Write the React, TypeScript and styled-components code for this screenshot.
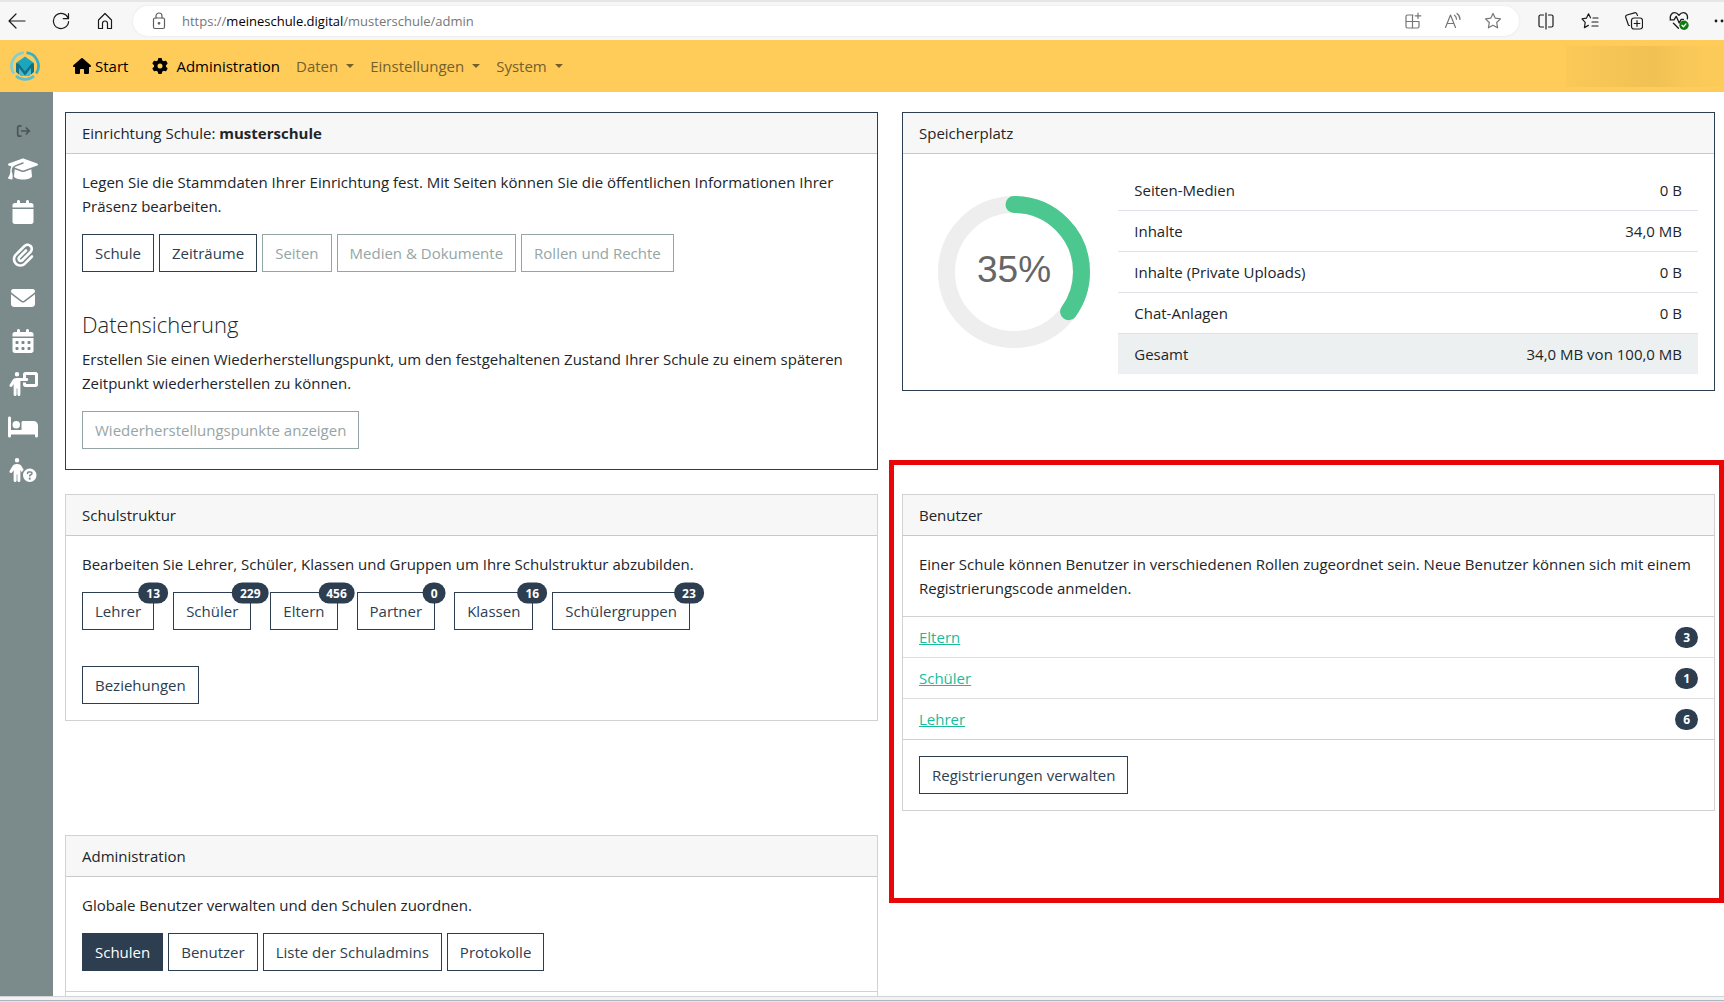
import React from "react";
import styled, { createGlobalStyle, css } from "styled-components";
import {
  FaBed,
  FaCalendar,
  FaCalendarDays,
  FaEnvelope,
  FaGear,
  FaGraduationCap,
  FaHouse,
  FaPaperclip,
  FaPersonChalkboard,
  FaPersonCircleQuestion,
} from "react-icons/fa6";

const color = {
  primary: "#2c3e50",
  muted: "#95a5a6",
  text: "#212529",
  link: "#18bc9c",
  nav: "#ffcc5a",
  side: "#7b8a8b",
  line: "#d2d2d2",
};

const GlobalStyle = createGlobalStyle`
  *, *::before, *::after { box-sizing: border-box; }
  body {
    margin: 0;
    background: #fff;
    color: ${color.text};
    font-family: "Open Sans", "Noto Sans", sans-serif;
    font-size: 15px;
    line-height: 24px;
  }
  button { font: inherit; color: inherit; cursor: pointer; }
  p { margin: 0; }
`;

const Page = styled.div`
  height: 100vh;
  display: flex;
  flex-direction: column;
  overflow: hidden;
`;

/* ---------- browser bar ---------- */

const BrowserBar = styled.header`
  flex: none;
  height: 40px;
  display: flex;
  align-items: center;
  border-top: 2px solid #e6e6e6;
  background: #f7f7f7;
  padding: 0 0 0 8px;
  overflow: hidden;
`;

const BarButton = styled.button<{ $tone?: string; $space?: number }>`
  flex: none;
  display: flex;
  padding: 0;
  border: 0;
  background: none;
  color: ${(p) => p.$tone ?? "#1b1b1b"};
  margin-right: ${(p) => p.$space ?? 0}px;
`;

const Address = styled.div`
  flex: 1;
  min-width: 0;
  height: 30px;
  display: flex;
  align-items: center;
  margin: 0 18px 0 19px;
  padding: 0 17px;
  border-radius: 15px;
  background: #fff;
  box-shadow: 0 0 3px rgba(0, 0, 0, 0.08);
`;

const Url = styled.span`
  flex: 1;
  margin-left: 14px;
  color: #767676;
  font-size: 13px;
  line-height: 20px;
  white-space: nowrap;

  b {
    font-weight: 400;
    color: #000;
  }
`;

const Glyph = ({ children, size = 18, w = 1.2 }: { children: React.ReactNode; size?: number; w?: number }) => (
  <svg width={size} height={size} viewBox="0 0 18 18" fill="none" stroke="currentColor" strokeWidth={w} strokeLinecap="round" strokeLinejoin="round" aria-hidden="true">
    {children}
  </svg>
);

const star = "M9 1.4l2.3 4.8 5.2.7-3.8 3.6.9 5.3L9 13.3l-4.6 2.5.9-5.3L1.500 6.900l5.200-.7z";

const Browser = () => (
  <BrowserBar>
    <BarButton aria-label="Zurück" $space={26}>
      <Glyph><path d="M17 9H1.200M8 2L1 9l7 7" /></Glyph>
    </BarButton>
    <BarButton aria-label="Neu laden" $space={26}>
      <Glyph><path d="M16.200 6.500A7.600 7.600 0 1 0 16.600 9.500M16.500 1.500v5.200h-5.200" /></Glyph>
    </BarButton>
    <BarButton aria-label="Startseite">
      <Glyph><path d="M2.500 8L9 1.500 15.500 8v8.500h-4v-5a2.500 2.500 0 0 0-5 0v5h-4z" /></Glyph>
    </BarButton>
    <Address>
      <BarButton aria-label="Websiteinformationen" $tone="#5f5f5f">
        <Glyph>
          <rect x="3.500" y="6" width="11" height="10.500" rx="1.500" />
          <path d="M6 6V4a3 3 0 0 1 6 0v2" />
          <circle cx="9" cy="11.300" r=".8" fill="currentColor" />
        </Glyph>
      </BarButton>
      <Url>https://<b>meineschule.digital</b>/musterschule/admin</Url>
      <BarButton aria-label="App installieren" $tone="#767676" $space={22}>
        <Glyph>
          <path d="M9 3H3.500A1.500 1.500 0 0 0 2 4.500v10A1.500 1.500 0 0 0 3.500 16h10a1.500 1.500 0 0 0 1.500-1.500V9.500M2 9.500h13M8.500 3v13M14 1v5.500M11.200 3.800h5.600" />
        </Glyph>
      </BarButton>
      <BarButton aria-label="Laut vorlesen" $tone="#767676" $space={22}>
        <Glyph><path d="M1.500 15.500L6.500 3l5 12.500M3.200 11.500h6.600M10.500 3.200a5 5 0 0 1 2 4M13 1.500a7.500 7.500 0 0 1 3 6" /></Glyph>
      </BarButton>
      <BarButton aria-label="Zu Favoriten hinzufügen" $tone="#767676">
        <Glyph><path d={star} /></Glyph>
      </BarButton>
    </Address>
    <BarButton aria-label="Geteilter Bildschirm" $space={26}>
      <Glyph><path d="M6.500 3H3.500A1.500 1.500 0 0 0 2 4.500v9A1.500 1.500 0 0 0 3.500 15h3M11.500 3h3A1.500 1.500 0 0 1 16 4.500v9a1.500 1.500 0 0 1-1.500 1.500h-3M9 1v16" /></Glyph>
    </BarButton>
    <BarButton aria-label="Favoriten" $space={26}>
      <Glyph><path d="M9.500 5.800L7.500 1.800 5.400 6.200 1 6.900l3.200 3.500-.8 5.200 4-2.200M12 6h5M11 10h6M11 14h6" /></Glyph>
    </BarButton>
    <BarButton aria-label="Sammlungen" $space={26}>
      <Glyph>
        <rect x="6.500" y="6" width="11" height="11" rx="2.500" />
        <path d="M12 8.700v5.600M9.200 11.500h5.600M4.500 13.500l-1-.3L.8 5.500A2 2 0 0 1 2 3L9.500.8A2 2 0 0 1 12 2.200l.5 1.300" />
      </Glyph>
    </BarButton>
    <BarButton aria-label="Browserleistung" $space={25}>
      <Glyph size={20}>
        <path d="M1.500 8C.3 4.500 2.300 1.500 5 1.500c2 0 3 1 4 2.300 1-1.300 2-2.300 4-2.300 2.500 0 4.200 2.500 3.500 5.500M1 8h3.500L6.500 4.800l2.700 6 1.800-3.300h2M4 11l4.500 4.500" />
        <circle cx="13.500" cy="12.800" r="4.200" fill="#107c10" stroke="none" />
        <path d="M11.700 12.900l1.300 1.300 2.300-2.600" stroke="#fff" />
      </Glyph>
    </BarButton>
    <BarButton aria-label="Einstellungen und mehr">
      <svg width="10" height="18" viewBox="0 0 10 18" fill="currentColor" aria-hidden="true">
        <circle cx="2" cy="9" r="1.400" />
        <circle cx="8" cy="9" r="1.400" />
      </svg>
    </BarButton>
  </BrowserBar>
);

/* ---------- navigation ---------- */

const NavBar = styled.nav`
  flex: none;
  height: 52px;
  display: flex;
  align-items: center;
  padding-left: 9px;
  background: ${color.nav};
`;

const LogoLink = styled.a`
  display: flex;
  margin-right: 32px;
`;

const NavLink = styled.a<{ $gap: number; $after: number }>`
  display: flex;
  align-items: center;
  gap: ${(p) => p.$gap}px;
  margin-right: ${(p) => p.$after}px;
  color: #000;
  text-decoration: none;
`;

const NavMenu = styled.button`
  display: flex;
  align-items: center;
  gap: 8px;
  padding: 0;
  margin-right: 16px;
  border: 0;
  background: none;
  color: #73602d;

  &::after {
    content: "";
    border: 4px solid transparent;
    border-top-color: currentColor;
    border-bottom: 0;
  }
`;

const Account = styled.div`
  width: 158px;
  height: 41px;
  margin-left: auto;
  background: linear-gradient(90deg, #fac957 0%, #f4c455 35%, #f0c153 55%, #f8c858 75%, #fdcb59 100%);
`;

const Logo = () => (
  <svg width="32" height="32" viewBox="0 0 32 32" fill="none" aria-hidden="true">
    <g strokeWidth="2.800">
      <path d="M14.800 2.600A13.500 13.500 0 0 0 4.800 23.500" stroke="#86cdd0" />
      <path d="M17.500 2.600A13.500 13.500 0 0 1 27.200 23.500" stroke="#38b1c4" />
      <path d="M7 26A13.500 13.500 0 0 0 25 26" stroke="#5bbfcf" />
    </g>
    <path d="M16 6.500L25 13v8l-5 5h-8l-5-5v-8z" fill="#1aa6bd" />
    <path d="M10 17l6 8 6-8v6.500L19 26h-6l-3-2.500z" fill="#43bccd" />
    <path d="M7 13.500h2.500L16 21.500l6.500-8H25v8.500l-3 2.500V18l-6 7.500L10 18v6.500L7 22z" fill="#176f86" />
  </svg>
);

/* ---------- sidebar ---------- */

const Middle = styled.div`
  flex: 1;
  min-height: 0;
  display: flex;
  overflow: hidden;
`;

const Sidebar = styled.aside`
  flex: none;
  width: 53px;
  display: flex;
  flex-direction: column;
  align-items: center;
  padding: 31px 7px 0 0;
  background: ${color.side};
`;

const SideLink = styled.a<{ $wide?: boolean }>`
  height: 43px;
  display: flex;
  align-items: center;
  color: #fff;

  svg {
    width: ${(p) => (p.$wide ? 30 : 24)}px;
    height: 24px;
  }
`;

const Collapse = styled.button`
  display: flex;
  padding: 0;
  margin-bottom: 8px;
  border: 0;
  background: none;
  color: #4a5556;
`;

const sideItems = [
  { label: "Unterricht", Icon: FaGraduationCap, wide: true },
  { label: "Kalender", Icon: FaCalendar },
  { label: "Dateien", Icon: FaPaperclip },
  { label: "Nachrichten", Icon: FaEnvelope },
  { label: "Termine", Icon: FaCalendarDays },
  { label: "Vertretung", Icon: FaPersonChalkboard, wide: true },
  { label: "Krankmeldung", Icon: FaBed, wide: true },
  { label: "Hilfe", Icon: FaPersonCircleQuestion, wide: true },
];

/* ---------- cards ---------- */

const Main = styled.main`
  flex: 1;
  min-width: 0;
  display: grid;
  grid-template-columns: minmax(0, 1fr) minmax(0, 1fr);
  align-content: start;
  align-items: start;
  gap: 24px;
  padding: 20px 9px 0 12px;
  overflow: hidden;
`;

const Card = styled.section<{ $strong?: boolean }>`
  border: 1px solid ${(p) => (p.$strong ? color.primary : color.line)};
  background: #fff;
`;

const CardHeader = styled.header`
  padding: 8px 16px;
  border-bottom: 1px solid #c9c9c9;
  background: #f7f7f7;
`;

const CardBody = styled.div`
  padding: 16px;
`;

const Heading = styled.h4`
  margin: 34px 0 8px;
  font-size: 22px;
  font-weight: 300;
  line-height: 29px;
`;

const Actions = styled.div<{ $wide?: boolean }>`
  display: flex;
  flex-wrap: wrap;
  margin-top: 16px;
  ${(p) =>
    p.$wide
      ? css`
          gap: 36px 19px;
        `
      : css`
          gap: 5px;
          padding-bottom: 4px;
        `}
`;

const Break = styled.div`
  flex-basis: 100%;
  display: flex;
`;

const Button = styled.button<{ $filled?: boolean }>`
  position: relative;
  height: 38px;
  padding: 0 12px;
  border: 1px solid ${color.primary};
  background: ${(p) => (p.$filled ? color.primary : "transparent")};
  color: ${(p) => (p.$filled ? "#fff" : color.primary)};
  white-space: nowrap;

  &:disabled {
    border-color: ${color.muted};
    color: ${color.muted};
    cursor: default;
  }
`;

const Badge = styled.span`
  min-width: 22px;
  padding: 4px 8px;
  border-radius: 11px;
  background: ${color.primary};
  color: #fff;
  font-size: 12px;
  font-weight: 700;
  line-height: 13px;
  text-align: center;
`;

const CornerBadge = styled(Badge)`
  position: absolute;
  top: 0;
  left: 100%;
  transform: translate(-50%, -50%);
`;

const StorageBody = styled(CardBody)`
  display: grid;
  grid-template-columns: minmax(0, 1fr) minmax(0, 3fr);
  gap: 6px;
`;

const Chart = styled.svg`
  margin: 26px 0 0 19px;
`;

const Table = styled.table`
  width: 100%;
  border-collapse: collapse;

  th,
  td {
    padding: 8px 16px;
    border-bottom: 1px solid #dee2e6;
    font-weight: 400;
    text-align: left;
  }
  td {
    text-align: right;
  }
  tr:last-child > * {
    background: #ecf0f1;
    border-bottom: 0;
  }
`;

const RoleList = styled.ul`
  margin: 0;
  padding: 0;
  list-style: none;
  border-top: 1px solid ${color.line};
  border-bottom: 1px solid ${color.line};
`;

const RoleRow = styled.li`
  display: flex;
  align-items: center;
  justify-content: space-between;
  padding: 8px 16px;

  & + & {
    border-top: 1px solid #dfdfdf;
  }
  a {
    color: ${color.link};
  }
`;

const Highlighted = styled.div`
  position: relative;
`;

const Marker = styled.div`
  position: absolute;
  top: -34px;
  right: -9px;
  bottom: -92px;
  left: -13px;
  border: 5px solid #e90606;
  pointer-events: none;
`;

const CardTail = styled.div`
  height: 24px;
  border-top: 1px solid ${color.line};
`;

const StatusStrip = styled.footer`
  flex: none;
  height: 6px;
  border-top: 1px solid #d3d3d3;
  border-bottom: 1px solid #dde5f1;
  background: linear-gradient(#f2f2f2 3px, #abb5c6 3px);
`;

const storage = [
  ["Seiten-Medien", "0 B"],
  ["Inhalte", "34,0 MB"],
  ["Inhalte (Private Uploads)", "0 B"],
  ["Chat-Anlagen", "0 B"],
  ["Gesamt", "34,0 MB von 100,0 MB"],
];

const structure: [string, number][] = [
  ["Lehrer", 13],
  ["Schüler", 229],
  ["Eltern", 456],
  ["Partner", 0],
  ["Klassen", 16],
  ["Schülergruppen", 23],
];

const roles: [string, number][] = [
  ["Eltern", 3],
  ["Schüler", 1],
  ["Lehrer", 6],
];

const StorageRing = ({ percent }: { percent: number }) => (
  <Chart width="152" height="152" viewBox="0 0 152 152" role="img" aria-label={`${percent}% belegt`}>
    <g fill="none" strokeWidth="17" transform="rotate(-90 76 76)">
      <circle cx="76" cy="76" r="67.500" stroke="#eee" />
      <circle cx="76" cy="76" r="67.500" stroke="#4cc790" strokeLinecap="round" pathLength={100} strokeDasharray={`${percent} 100`} />
    </g>
    <text x="76" y="86" textAnchor="middle" fill="#666" fontFamily="Liberation Sans, Arial, sans-serif" fontSize="37">
      {percent}%
    </text>
  </Chart>
);

export default function App() {
  return (
    <Page>
      <GlobalStyle />
      <Browser />
      <NavBar>
        <LogoLink href="#" aria-label="meineschule.digital"><Logo /></LogoLink>
        <NavLink href="#start" $gap={4} $after={24}><FaHouse size={18} />Start</NavLink>
        <NavLink href="#admin" $gap={8} $after={16}><FaGear size={16} />Administration</NavLink>
        <NavMenu>Daten</NavMenu>
        <NavMenu>Einstellungen</NavMenu>
        <NavMenu>System</NavMenu>
        <Account />
      </NavBar>
      <Middle>
        <Sidebar>
          <Collapse aria-label="Seitenleiste ausklappen">
            <svg width="15" height="16" viewBox="0 0 15 16" fill="none" stroke="currentColor" strokeWidth="1.700" aria-hidden="true">
              <path d="M5.500 2.800H3.500A1.800 1.800 0 0 0 1.700 4.600v6.800a1.800 1.800 0 0 0 1.800 1.800h2M5 8h8M9.800 4.500L13.300 8l-3.500 3.500" />
            </svg>
          </Collapse>
          {sideItems.map(({ label, Icon, wide }) => (
            <SideLink key={label} href="#" aria-label={label} $wide={wide}><Icon /></SideLink>
          ))}
        </Sidebar>
        <Main>
          <Card $strong>
            <CardHeader>Einrichtung Schule: <strong>musterschule</strong></CardHeader>
            <CardBody>
              <p>
                Legen Sie die Stammdaten Ihrer Einrichtung fest. Mit Seiten können Sie die öffentlichen Informationen Ihrer
                Präsenz bearbeiten.
              </p>
              <Actions>
                <Button>Schule</Button>
                <Button>Zeiträume</Button>
                <Button disabled>Seiten</Button>
                <Button disabled>Medien &amp; Dokumente</Button>
                <Button disabled>Rollen und Rechte</Button>
              </Actions>
              <Heading>Datensicherung</Heading>
              <p>
                Erstellen Sie einen Wiederherstellungspunkt, um den festgehaltenen Zustand Ihrer Schule zu einem späteren
                Zeitpunkt wiederherstellen zu können.
              </p>
              <Actions>
                <Button disabled>Wiederherstellungspunkte anzeigen</Button>
              </Actions>
            </CardBody>
          </Card>

          <Card $strong>
            <CardHeader>Speicherplatz</CardHeader>
            <StorageBody>
              <StorageRing percent={35} />
              <Table>
                <tbody>
                  {storage.map(([name, size]) => (
                    <tr key={name}>
                      <th scope="row">{name}</th>
                      <td>{size}</td>
                    </tr>
                  ))}
                </tbody>
              </Table>
            </StorageBody>
          </Card>

          <Card>
            <CardHeader>Schulstruktur</CardHeader>
            <CardBody>
              <p>Bearbeiten Sie Lehrer, Schüler, Klassen und Gruppen um Ihre Schulstruktur abzubilden.</p>
              <Actions $wide>
                {structure.map(([name, count]) => (
                  <Button key={name}>
                    {name}
                    <CornerBadge>{count}</CornerBadge>
                  </Button>
                ))}
                <Break>
                  <Button>Beziehungen</Button>
                </Break>
              </Actions>
            </CardBody>
          </Card>

          <Highlighted>
            <Card>
              <CardHeader>Benutzer</CardHeader>
              <CardBody>
                <p>
                  Einer Schule können Benutzer in verschiedenen Rollen zugeordnet sein. Neue Benutzer können sich mit einem
                  Registrierungscode anmelden.
                </p>
              </CardBody>
              <RoleList>
                {roles.map(([name, count]) => (
                  <RoleRow key={name}>
                    <a href="#">{name}</a>
                    <Badge>{count}</Badge>
                  </RoleRow>
                ))}
              </RoleList>
              <CardBody>
                <Button>Registrierungen verwalten</Button>
              </CardBody>
            </Card>
            <Marker />
          </Highlighted>

          <Card>
            <CardHeader>Administration</CardHeader>
            <CardBody>
              <p>Globale Benutzer verwalten und den Schulen zuordnen.</p>
              <Actions>
                <Button $filled>Schulen</Button>
                <Button>Benutzer</Button>
                <Button>Liste der Schuladmins</Button>
                <Button>Protokolle</Button>
              </Actions>
            </CardBody>
            <CardTail />
          </Card>
        </Main>
      </Middle>
      <StatusStrip />
    </Page>
  );
}
